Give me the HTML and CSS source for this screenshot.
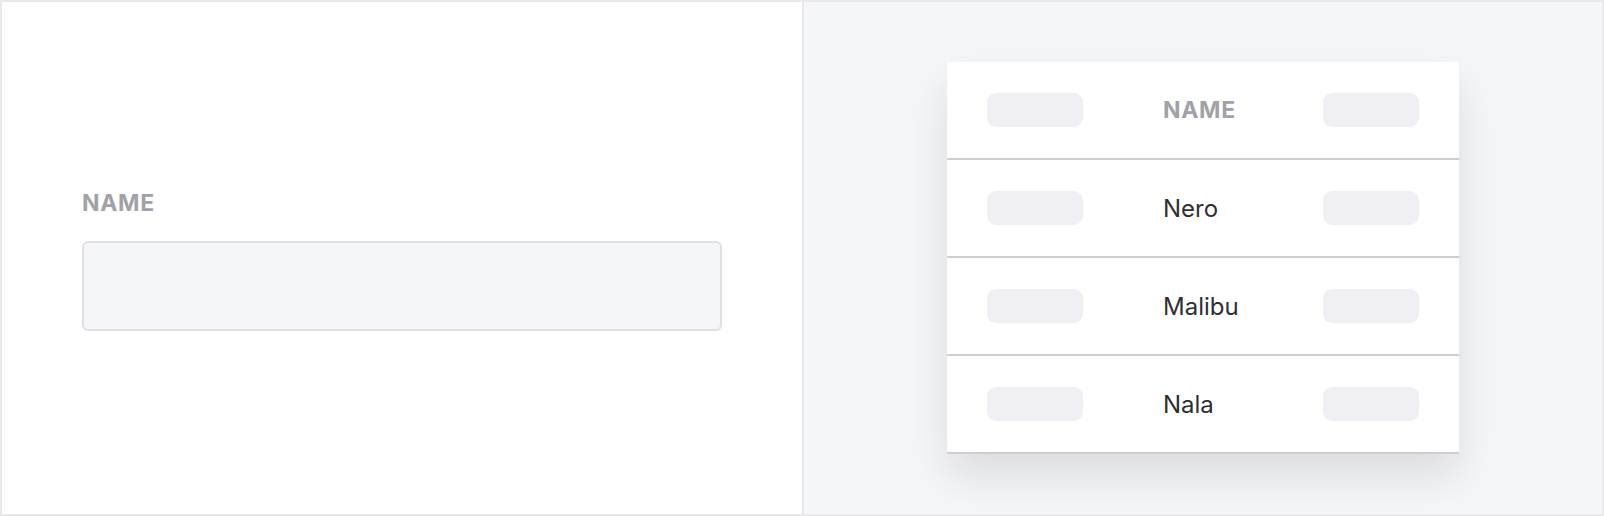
FILE: index.html
```html
<!DOCTYPE html>
<html>
<head>
<meta charset="utf-8">
<link rel="stylesheet" href="styles.css">
</head>
<body>
<div class="frame">
  <section class="panel panel-left">
    <div class="field">
      <label class="field-label">NAME</label>
      <div class="field-input"></div>
    </div>
  </section>
  <section class="panel panel-right">
    <div class="card">
      <div class="row row-head">
        <span class="pill"></span>
        <span class="cell-head">NAME</span>
        <span class="pill"></span>
      </div>
      <div class="row">
        <span class="pill"></span>
        <span class="cell">Nero</span>
        <span class="pill"></span>
      </div>
      <div class="row">
        <span class="pill"></span>
        <span class="cell">Malibu</span>
        <span class="pill"></span>
      </div>
      <div class="row">
        <span class="pill"></span>
        <span class="cell">Nala</span>
        <span class="pill"></span>
      </div>
    </div>
  </section>
</div>
</body>
</html>
```
FILE: styles.css
```css
* { box-sizing: border-box; }
html, body { margin: 0; padding: 0; }
body {
  width: 1604px;
  height: 516px;
  overflow: hidden;
  font-family: "Inter", "Noto Sans", "Liberation Sans", sans-serif;
  background: #e9e9ed;
}
.frame {
  display: grid;
  grid-template-columns: 800px 1fr;
  gap: 2px;
  padding: 2px;
  height: 516px;
  background: #e9e9ed;
}
.panel {
  height: 512px;
  display: flex;
  align-items: center;
  justify-content: center;
}
.panel-left { background: #ffffff; padding: 0 80px 0 80px; }
.panel-right { background: #f5f6f8; }
.field { width: 100%; display: flex; flex-direction: column; margin-top: 4px; }
.field-label {
  font-size: 23px;
  line-height: 28px;
  font-weight: 700;
  color: #a1a1a8;
  letter-spacing: 0.7px;
  margin-bottom: 24px;
}
.field-input {
  height: 90px;
  border: 2px solid #e0e0e4;
  border-radius: 6px;
  background: #f5f6f8;
}
.card {
  width: 512px;
  background: #ffffff;
  box-shadow: 0 22px 40px rgba(20, 20, 40, 0.11);
}
.row {
  display: grid;
  grid-template-columns: 96px 1fr 96px;
  column-gap: 80px;
  align-items: center;
  height: 98px;
  padding: 0 40px;
  border-bottom: 2px solid #cdcdd2;
}
.pill {
  display: block;
  height: 34px;
  border-radius: 9px;
  background: #f0f0f4;
}
.cell-head {
  font-size: 23px;
  font-weight: 700;
  color: #a1a1a8;
  letter-spacing: 0.7px;
}
.cell {
  font-size: 24px;
  color: #2f2f33;
}
```
